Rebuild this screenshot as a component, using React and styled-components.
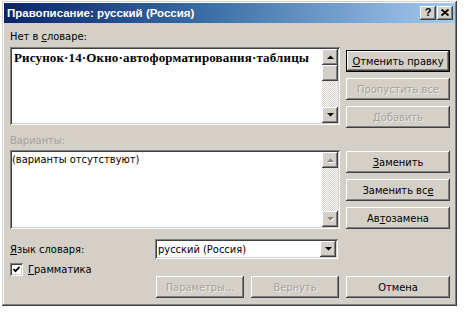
import React from 'react';
import styled, { createGlobalStyle, css } from 'styled-components';

const GlobalStyle = createGlobalStyle`
  html, body { margin: 0; padding: 0; background: #fff; }
  body {
    font-family: "DejaVu Sans Condensed", "DejaVu Sans", sans-serif;
    font-stretch: condensed;
    font-size: 11px;
    color: #000;
  }
  * { box-sizing: border-box; }
`;

const raised = css`
  background: #d4d0c8;
  box-shadow: inset -1px -1px #404040, inset 1px 1px #ffffff, inset -2px -2px #808080, inset 2px 2px #d4d0c8;
`;

const sunken = css`
  box-shadow: inset 1px 1px #808080, inset -1px -1px #ffffff, inset 2px 2px #404040, inset -2px -2px #d4d0c8;
`;

const Page = styled.div`
  padding: 1px 0 0 2px;
`;

const Window = styled.div`
  width: 455px;
  padding: 2px;
  background: #d4d0c8;
  box-shadow: inset -1px -1px #404040, inset 1px 1px #d4d0c8, inset -2px -2px #808080, inset 2px 2px #ffffff;
`;

const TitleBar = styled.div`
  height: 20px;
  display: flex;
  align-items: center;
  padding: 0 2px 0 3px;
  background: linear-gradient(to right, #0a246a 0%, #3a6ea5 45%, #a6caf0 100%);
`;

const TitleText = styled.div`
  flex: 1;
  color: #fff;
  font-family: "Liberation Sans", Arial, sans-serif;
  font-stretch: normal;
  font-weight: bold;
  font-size: 11.5px;
`;

const TitleButtons = styled.div`
  display: flex;
  gap: 1px;
`;

const TitleButton = styled.div`
  ${raised};
  width: 16px;
  height: 14px;
  display: flex;
  align-items: center;
  justify-content: center;
  font-family: "Liberation Sans", Arial, sans-serif;
  font-weight: bold;
  font-size: 11px;
  line-height: 1;
  padding-bottom: 1px;
`;

const Body = styled.div`
  padding: 7px 5px 6px 6px;
`;

const Section = styled.div`
  display: grid;
  grid-template-columns: 330px 104px;
  column-gap: 6px;
  margin-top: ${p => p.$top || 0}px;
`;

const LeftCol = styled.div`
  display: flex;
  flex-direction: column;
`;

const Label = styled.div`
  height: 14px;
  line-height: 14px;
  margin-bottom: ${p => p.$gap || 0}px;
  color: ${p => (p.$disabled ? '#a6a39c' : '#000')};
  white-space: nowrap;
`;

const ButtonStack = styled.div`
  display: flex;
  flex-direction: column;
  gap: 6px;
  padding-top: ${p => p.$top}px;
`;

const Button = styled.div`
  ${raised};
  height: 22px;
  width: ${p => (p.$w ? `${p.$w}px` : 'auto')};
  display: flex;
  align-items: center;
  justify-content: center;
  white-space: nowrap;
  color: ${p => (p.$disabled ? '#a6a39c' : '#000')};
  text-shadow: ${p => (p.$disabled ? '1px 1px rgba(255,255,255,0.6)' : 'none')};
  ${p =>
    p.$default &&
    css`
      box-shadow: inset 0 0 0 1px #000, inset -2px -2px #404040, inset 2px 2px #ffffff,
        inset -3px -3px #808080;
    `}
`;

const ListBox = styled.div`
  ${sunken};
  background: #fff;
  height: ${p => p.$h}px;
  padding: 2px;
  display: flex;
`;

const ListText = styled.div`
  flex: 1;
  padding: ${p => (p.$serif ? '1px 2px' : '1px 0')};
  white-space: nowrap;
  overflow: hidden;
  ${p =>
    p.$serif &&
    css`
      font-family: "Liberation Serif", "Times New Roman", serif;
      font-stretch: normal;
      font-weight: bold;
      font-size: 13px;
      letter-spacing: 0.15px;
    `}
`;

const ScrollBar = styled.div`
  width: 16px;
  display: flex;
  flex-direction: column;
  justify-content: space-between;
  background: repeating-conic-gradient(#d4d0c8 0 25%, #ffffff 0 50%) 0 0 / 2px 2px;
`;

const ScrollTop = styled.div`
  display: flex;
  flex-direction: column;
`;

const ScrollButton = styled.div`
  ${raised};
  width: 16px;
  height: 16px;
  display: flex;
  align-items: center;
  justify-content: center;
`;

const Thumb = styled.div`
  ${raised};
  width: 16px;
  height: 16px;
`;

const BottomArea = styled.div`
  margin-top: 10px;
  display: flex;
  flex-direction: column;
`;

const LangRow = styled.div`
  display: flex;
  align-items: center;
  height: 20px;
`;

const LangLabel = styled.div`
  width: 145px;
  padding-top: 1px;
`;

const Combo = styled.div`
  ${sunken};
  background: #fff;
  width: 183px;
  height: 20px;
  padding: 2px;
  display: flex;
  align-items: center;
`;

const ComboText = styled.div`
  flex: 1;
  padding-left: 1px;
`;

const CheckRow = styled.div`
  display: flex;
  align-items: center;
  gap: 5px;
  height: 14px;
  margin-top: 3px;
`;

const CheckBox = styled.div`
  ${sunken};
  background: #fff;
  width: 13px;
  height: 13px;
  display: flex;
  align-items: center;
  justify-content: center;
`;

const ButtonRow = styled.div`
  display: flex;
  justify-content: flex-end;
  gap: 7px;
`;

const Arrow = ({ dir = 'up', disabled }) => (
  <svg width="7" height="4" viewBox="0 0 7 4" style={{ overflow: 'visible' }}>
    {disabled && (
      <polygon
        points={dir === 'up' ? '1,5 8,5 4.5,1.5' : '1,1 8,1 4.5,4.5'}
        fill="#fff"
      />
    )}
    <polygon
      points={dir === 'up' ? '0,4 7,4 3.5,0.5' : '0,0 7,0 3.5,3.5'}
      fill={disabled ? '#808080' : '#000'}
    />
  </svg>
);

const Scroll = ({ thumb, disabled }) => (
  <ScrollBar>
    <ScrollTop>
      <ScrollButton>
        <Arrow dir="up" disabled={disabled} />
      </ScrollButton>
      {thumb && <Thumb />}
    </ScrollTop>
    <ScrollButton>
      <Arrow dir="down" disabled={disabled} />
    </ScrollButton>
  </ScrollBar>
);

export default function App() {
  return (
    <>
      <GlobalStyle />
      <Page>
        <Window>
          <TitleBar>
            <TitleText>Правописание: русский (Россия)</TitleText>
            <TitleButtons>
              <TitleButton>?</TitleButton>
              <TitleButton>
                <svg width="8" height="7" viewBox="0 0 8 7">
                  <path d="M0.5 0.5 L7.5 6.5 M7.5 0.5 L0.5 6.5" stroke="#000" strokeWidth="1.8" />
                </svg>
              </TitleButton>
            </TitleButtons>
          </TitleBar>
          <Body>
            <Section>
              <LeftCol>
                <Label $gap={3}>
                  Нет в <u>с</u>ловаре:
                </Label>
                <ListBox $h={78}>
                  <ListText $serif>Рисунок·14·Окно·автоформатирования·таблицы</ListText>
                  <Scroll thumb />
                </ListBox>
              </LeftCol>
              <ButtonStack $top={20}>
                <Button $default>
                  <span>
                    <u>О</u>тменить правку
                  </span>
                </Button>
                <Button $disabled>Пропустить все</Button>
                <Button $disabled>Добавить</Button>
              </ButtonStack>
            </Section>
            <Section $top={6}>
              <LeftCol>
                <Label $gap={2} $disabled>
                  Варианты:
                </Label>
                <ListBox $h={79}>
                  <ListText>(варианты отсутствуют)</ListText>
                  <Scroll disabled />
                </ListBox>
              </LeftCol>
              <ButtonStack $top={17}>
                <Button>
                  <span>
                    <u>З</u>аменить
                  </span>
                </Button>
                <Button>
                  <span>
                    Заменить вс<u>е</u>
                  </span>
                </Button>
                <Button>
                  <span>
                    Ав<u>т</u>озамена
                  </span>
                </Button>
              </ButtonStack>
            </Section>
            <BottomArea>
              <LangRow>
                <LangLabel>
                  <u>Я</u>зык словаря:
                </LangLabel>
                <Combo>
                  <ComboText>русский (Россия)</ComboText>
                  <ScrollButton>
                    <Arrow dir="down" />
                  </ScrollButton>
                </Combo>
              </LangRow>
              <CheckRow>
                <CheckBox>
                  <svg width="7" height="7" viewBox="0 0 7 7">
                    <path d="M0.5 3 L2.5 5.2 L6.5 1" stroke="#000" strokeWidth="1.8" fill="none" />
                  </svg>
                </CheckBox>
                <span>
                  <u>Г</u>рамматика
                </span>
              </CheckRow>
              <ButtonRow>
                <Button $w={88} $disabled>
                  Параметры...
                </Button>
                <Button $w={88} $disabled>
                  Вернуть
                </Button>
                <Button $w={104}>Отмена</Button>
              </ButtonRow>
            </BottomArea>
          </Body>
        </Window>
      </Page>
    </>
  );
}
